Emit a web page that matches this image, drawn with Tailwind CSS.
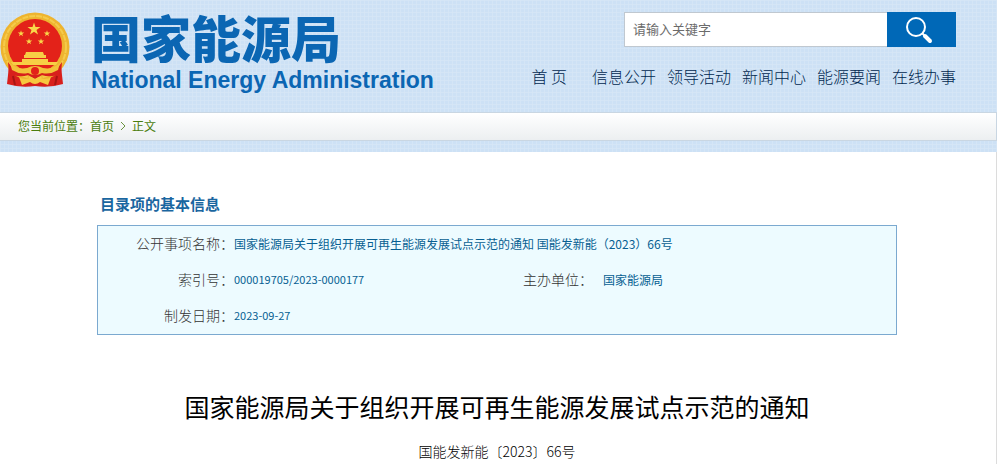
<!DOCTYPE html>
<html lang="zh-CN">
<head>
  <meta charset="UTF-8">
  <meta name="viewport" content="width=device-width, initial-scale=1.0">
  <title>国家能源局</title>
  <script src="https://cdn.jsdelivr.net/npm/@tailwindcss/browser@4"></script>
</head>
<body class="bg-white font-['Noto_Sans_CJK_SC',sans-serif]">
  <!-- Header -->
  <div class="bg-[#cde1f5] bg-[linear-gradient(#dbe9f780_1px,transparent_1px),linear-gradient(90deg,#dbe9f780_1px,transparent_1px)] bg-[size:4px_4px]">
    <header class="flex justify-between h-[112px] pr-[41px]">
      <a href="#" class="flex gap-[21px] text-[#0b66b3]">
        <svg class="w-[70px] h-[76px] mt-3" viewBox="0 0 70 76">
          <path d="M9 54 L7 72 Q20 76 35 74 Q50 76 63 72 L61 54Z" fill="#d8201c"/>
          <circle cx="35" cy="35" r="34.5" fill="#eeb42f"/>
          <circle cx="35" cy="35" r="31" fill="none" stroke="#f5cb4a" stroke-width="2" stroke-dasharray="6 1"/>
          <circle cx="35" cy="34" r="27" fill="#e32219"/>
          <path id="star" d="M34 10.5 L35.5 15 L40.5 15 L36.5 18 L38 22.5 L34 19.7 L30 22.5 L31.5 18 L27.5 15 L32.5 15Z" fill="#f9d84a"/>
          <use href="#star" transform="translate(4 13) scale(.5)"/>
          <use href="#star" transform="translate(30 13) scale(.5)"/>
          <use href="#star" transform="translate(12 21) scale(.5)"/>
          <use href="#star" transform="translate(24 21) scale(.5)"/>
          <path d="M26 40 H43 L44 43 H46 V46 H24 V43 H25Z M22 47 H48 V50 H58 L56 53 H13 L11 50 H22Z" fill="#f7cf45"/>
          <path d="M8 50 Q12 58 25 58 L35 63 L45 58 Q58 58 62 50 L61 62 Q50 66 42 63 L35 67 L28 63 Q20 66 9 62Z" fill="#d8201c"/>
          <path d="M10 51 Q17 58 27 56 Q35 52 43 56 Q53 58 60 51 L58 58 Q50 63 42 61 Q35 65 28 61 Q20 63 12 58Z" fill="#f3c23b"/>
          <path d="M19 65 Q26 69 31 65 L35 67 L39 65 Q44 69 51 65 L48 73 L40 70 Q35 74 30 70 L22 73Z" fill="#f6c83f"/>
          <circle cx="35" cy="59" r="4" fill="#e32219"/>
          <path d="M13 64 L15 73 M57 64 L55 73" stroke="#a81512" stroke-width="2"/>
        </svg>
        <div class="pt-2">
          <div class="text-[50px] leading-[56px] font-black">国家能源局</div>
          <div class="pt-[2px] text-[23px] leading-[28px] font-bold font-['Liberation_Sans',sans-serif] whitespace-nowrap">National Energy Administration</div>
        </div>
      </a>
      <div class="pt-3 flex flex-col items-end">
        <form class="flex w-[332px] h-[35px]">
          <input type="text" aria-label="请输入关键字" placeholder="请输入关键字" class="flex-1 min-w-0 px-2 pb-[2px] bg-white border border-r-0 border-[#c0c8d0] text-[13px] placeholder:text-[#6b6b6b] focus:outline-none">
          <button type="submit" aria-label="搜索" class="w-[69px] pr-[6px] bg-[#0068b7] flex items-center justify-center">
            <svg class="w-7 h-7" viewBox="0 0 28 28" fill="none" stroke="#fff">
              <circle cx="11" cy="11" r="9" stroke-width="2"/>
              <path d="M17 17 L20 20" stroke-width="2"/>
              <path d="M20 20 L25 25" stroke-width="4" stroke-linecap="round"/>
            </svg>
          </button>
        </form>
        <nav class="flex gap-[11px] mt-[17px] text-base leading-6 font-light text-[#00284f] whitespace-nowrap">
          <a href="#" class="mr-[14px]">首 页</a>
          <a href="#">信息公开</a>
          <a href="#">领导活动</a>
          <a href="#">新闻中心</a>
          <a href="#">能源要闻</a>
          <a href="#">在线办事</a>
        </nav>
      </div>
    </header>
    <!-- Breadcrumb -->
    <div class="flex items-center h-[29px] px-[18px] pb-[2px] border-y border-r border-[#c9d6e2] bg-linear-to-b from-white to-[#eceff1] text-xs text-[#4b7d0e]">
      <span>您当前位置：</span>
      <a href="#">首页</a>
      <svg class="w-[6px] h-[10px] mx-[6px]" viewBox="0 0 6 10" fill="none" stroke="#6b9440"><path d="M1 1 L5 5 L1 9"/></svg>
      <span>正文</span>
    </div>
    <div class="h-[11px]"></div>
  </div>

  <main class="min-h-[312px] pl-[97px] pr-[99px] pt-10 border-r border-[#dcdcdc]">
    <h2 class="px-[3px] text-[15px] leading-6 font-bold text-[#1a66a0]">目录项的基本信息</h2>
    <div class="mt-[9px] border border-[#7ba9d0] bg-[#edfbff]">
      <table class="w-full table-fixed text-left text-xs text-[#075f92]">
        <colgroup>
          <col class="w-[136px]">
          <col class="w-[289px]">
          <col class="w-[80px]">
          <col>
        </colgroup>
        <tbody>
          <tr class="h-9">
            <th scope="row" class="p-0 pb-[2px] text-right text-sm font-light text-[#333]">公开事项名称：</th>
            <td class="p-0" colspan="3">国家能源局关于组织开展可再生能源发展试点示范的通知 国能发新能（2023）66号</td>
          </tr>
          <tr class="h-9">
            <th scope="row" class="p-0 pb-[2px] text-right text-sm font-light text-[#333]">索引号：</th>
            <td class="p-0 pb-[2px] text-[11px]">000019705/2023-0000177</td>
            <th scope="row" class="p-0 pb-[2px] text-sm font-light text-[#333]">主办单位：</th>
            <td class="p-0">国家能源局</td>
          </tr>
          <tr class="h-9">
            <th scope="row" class="p-0 pb-[2px] text-right text-sm font-light text-[#333]">制发日期：</th>
            <td class="p-0 pb-[2px] text-[11px]" colspan="3">2023-09-27</td>
          </tr>
        </tbody>
      </table>
    </div>
    <h1 class="mt-[53px] text-center text-[25px] leading-9 text-black">国家能源局关于组织开展可再生能源发展试点示范的通知</h1>
    <p class="mt-[15px] text-center text-sm leading-6 font-light text-black">国能发新能〔2023〕66号</p>
  </main>
</body>
</html>
